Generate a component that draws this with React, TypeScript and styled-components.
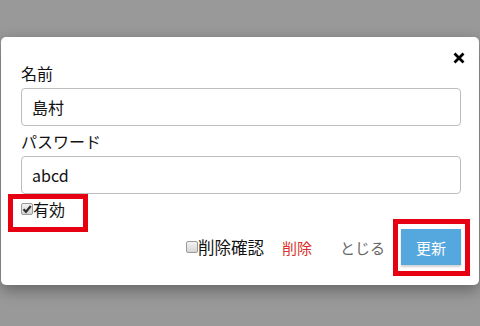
import React from "react";
import styled, { createGlobalStyle } from "styled-components";

const GlobalStyle = createGlobalStyle`
  html, body {
    margin: 0;
    padding: 0;
    background: #999999;
  }
  body {
    font-family: "Noto Sans CJK JP", "Noto Sans", sans-serif;
    color: #111;
  }
`;

const Page = styled.div`
  width: 480px;
  height: 326px;
  padding: 37px 1px 0 1px;
  box-sizing: border-box;
  position: relative;
  overflow: hidden;
`;

const Modal = styled.div`
  position: relative;
  background: #fff;
  border-radius: 5px;
  box-shadow: 0 5px 15px rgba(0, 0, 0, 0.35);
  padding: 24px 18px 20px 20px;
`;

const Close = styled.button`
  position: absolute;
  top: 15px;
  right: 14px;
  border: 0;
  background: none;
  padding: 0;
  width: 12px;
  height: 12px;
  cursor: pointer;
  display: flex;
`;

const Label = styled.div`
  font-size: 16px;
  line-height: 24px;
  height: 24px;
  margin-bottom: 3px;
`;

const Input = styled.div`
  box-sizing: border-box;
  height: 38px;
  border: 1px solid #bdbdbd;
  border-radius: 4px;
  padding: 0 10px;
  font-size: 16px;
  line-height: 36px;
  margin-bottom: 3px;
`;

const CheckRow = styled.label`
  display: flex;
  align-items: center;
  height: 24px;
  margin-top: 1px;
  font-size: 16px;
`;

const Box = styled.span`
  box-sizing: border-box;
  width: 12px;
  height: 12px;
  border: 1px solid #9a9a9a;
  border-radius: 2px;
  background: linear-gradient(#f2f2f2, #d6d6d6);
  display: inline-flex;
  align-items: center;
  justify-content: center;
  flex: none;
`;

const Footer = styled.div`
  display: flex;
  justify-content: flex-end;
  align-items: center;
  margin-top: 8px;
  height: 36px;
`;

const Confirm = styled.label`
  display: flex;
  align-items: center;
  font-size: 16.5px;
  margin-right: 18px;
`;

const LinkButton = styled.button<{ $tone: string; $gap: number }>`
  border: 0;
  background: none;
  padding: 0;
  font-family: inherit;
  font-size: 15px;
  color: ${(p) => p.$tone};
  margin-right: ${(p) => p.$gap}px;
  cursor: pointer;
`;

const Primary = styled.button`
  width: 60px;
  height: 36px;
  border: 0;
  background: #55a8dd;
  color: #fff;
  font-family: inherit;
  font-size: 15px;
  box-shadow: 0 2px 2px rgba(0, 0, 0, 0.18);
  cursor: pointer;
`;

const Mark = styled.div<{ $x: number; $y: number; $w: number; $h: number }>`
  position: absolute;
  left: ${(p) => p.$x}px;
  top: ${(p) => p.$y}px;
  width: ${(p) => p.$w}px;
  height: ${(p) => p.$h}px;
  box-sizing: border-box;
  border: 5px solid #e60012;
  pointer-events: none;
`;

const CheckBox = ({ checked }: { checked?: boolean }) => (
  <Box>
    {checked && (
      <svg width="10" height="10" viewBox="0 0 10 10">
        <path d="M1.5 5.2 L4 7.8 L8.8 2" fill="none" stroke="#333" strokeWidth="2.2" />
      </svg>
    )}
  </Box>
);

export default function App() {
  return (
    <Page>
      <GlobalStyle />
      <Modal>
        <Close aria-label="close">
          <svg width="12" height="12" viewBox="0 0 12 12">
            <path d="M1.5 1.5 L10.5 10.5 M10.5 1.5 L1.5 10.5" stroke="#000" strokeWidth="2.8" />
          </svg>
        </Close>
        <Label>名前</Label>
        <Input>島村</Input>
        <Label>パスワード</Label>
        <Input>abcd</Input>
        <CheckRow>
          <CheckBox checked />
          有効
        </CheckRow>
        <Footer>
          <Confirm>
            <CheckBox />
            削除確認
          </Confirm>
          <LinkButton $tone="#d9302c" $gap={28}>削除</LinkButton>
          <LinkButton $tone="#666" $gap={16}>とじる</LinkButton>
          <Primary>更新</Primary>
        </Footer>
      </Modal>
      <Mark $x={8} $y={194} $w={80} $h={38} />
      <Mark $x={393} $y={219} $w={77} $h={57} />
    </Page>
  );
}
